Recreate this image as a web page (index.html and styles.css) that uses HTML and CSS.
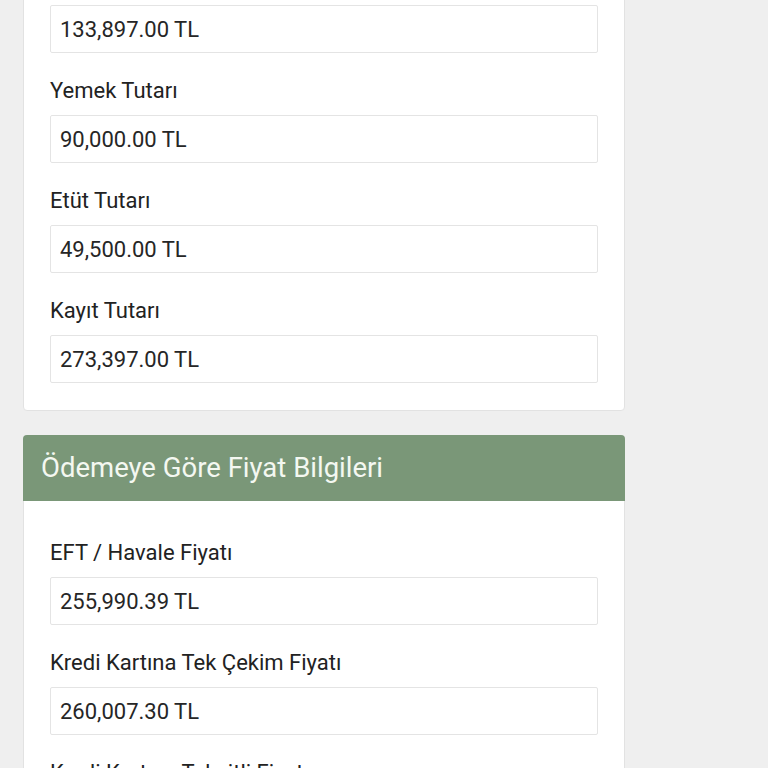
FILE: index.html
```html
<!DOCTYPE html>
<html lang="tr">

<head>
    <meta charset="UTF-8">
    <meta name="viewport" content="width=device-width, initial-scale=1.0">
    <title>Fiyat Bilgileri</title>
    <link rel="stylesheet" href="styles.css">
</head>

<body>
    <div class="page">
        <div class="card card-top">
            <div class="card-body">
                <div class="field">
                    <input type="text" class="field-input" value="133,897.00 TL" disabled />
                </div>
                <div class="field">
                    <label class="field-label">Yemek Tutarı</label>
                    <input type="text" class="field-input" value="90,000.00 TL" disabled />
                </div>
                <div class="field">
                    <label class="field-label">Etüt Tutarı</label>
                    <input type="text" class="field-input" value="49,500.00 TL" disabled />
                </div>
                <div class="field">
                    <label class="field-label">Kayıt Tutarı</label>
                    <input type="text" class="field-input" value="273,397.00 TL" disabled />
                </div>
            </div>
        </div>

        <div class="card">
            <div class="card-header">Ödemeye Göre Fiyat Bilgileri</div>
            <div class="card-body">
                <div class="field">
                    <label class="field-label">EFT / Havale Fiyatı</label>
                    <input type="text" class="field-input" value="255,990.39 TL" disabled />
                </div>
                <div class="field">
                    <label class="field-label">Kredi Kartına Tek Çekim Fiyatı</label>
                    <input type="text" class="field-input" value="260,007.30 TL" disabled />
                </div>
                <div class="field">
                    <label class="field-label">Kredi Kartına Taksitli Fiyatı</label>
                    <input type="text" class="field-input" value="273,397.00 TL" disabled />
                </div>
            </div>
        </div>
    </div>
</body>

</html>
```

FILE: styles.css
```css
body {
    font-family: Roboto, "Noto Sans", Arial, sans-serif;
    margin: 0;
    background-color: #efefef;
    color: #222;
    overflow: hidden;
}

.page {
    margin-top: -36px;
    padding: 0 23px;
}

.card {
    width: 602px;
    box-sizing: border-box;
    background: #fff;
    border: 1px solid #e2e2e2;
    border-radius: 4px;
    margin-bottom: 24px;
}

.card-header {
    background: #7a9778;
    color: #f4f8f1;
    font-size: 27.5px;
    height: 66px;
    line-height: 66px;
    padding: 0 18px;
    margin: -1px -1px 0;
    border-radius: 4px 4px 0 0;
}

.card-body {
    padding: 40px 26px 27px;
}

.field + .field {
    margin-top: 26px;
}

.field-label {
    display: block;
    font-size: 22px;
    line-height: 24px;
    margin-bottom: 12px;
}

.field-input {
    display: block;
    width: 100%;
    height: 48px;
    box-sizing: border-box;
    padding: 0 9px;
    font-family: inherit;
    font-size: 22px;
    color: #262626;
    background: #fff;
    border: 1px solid #e4e4e4;
    border-radius: 2px;
}
```
